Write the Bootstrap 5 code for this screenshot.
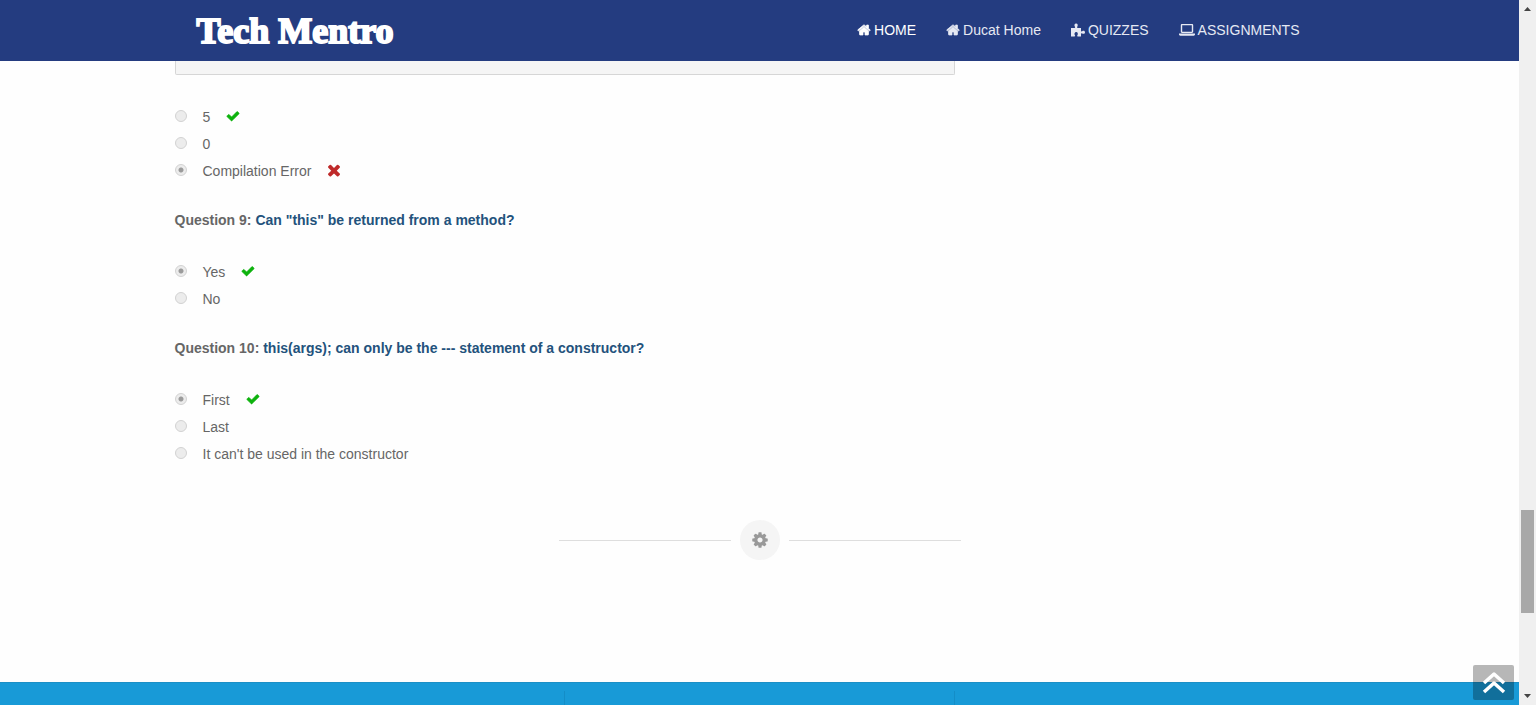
<!DOCTYPE html>
<html lang="en">
<head>
<meta charset="utf-8">
<meta name="viewport" content="width=device-width, initial-scale=1">
<title>Tech Mentro</title>
<link href="https://cdn.jsdelivr.net/npm/bootstrap@5.3.0/dist/css/bootstrap.min.css" rel="stylesheet">
<style>
body { font: 14px/20px "Liberation Sans", Arial, sans-serif; color: #666; background: #fefefe; }
.page-wrap { max-width: 1170px; }
.topbar { background: #243c80; height: 61px; }
.brand { font: bold 36px/40px "Liberation Serif", "Times New Roman", serif; color: #fff; -webkit-text-stroke: 2px #fff; margin-left: 22px; }
.brand:hover { color: #fff; }
.menu { gap: 30px; margin-right: 45px; padding-bottom: 2px; }
.menu .nav-link { color: #e6e9f3; gap: 3px; }
.menu .nav-link.active { color: #fff; }
.ico { width: 14px; height: 14px; fill: currentColor; flex: none; }
.ico-wide { width: 16px; }
.code-box { height: 14px; background: #f5f5f5; border: 1px solid #d6d6d6; border-top: 0; border-radius: 0 0 2px 2px; }
.first-answers { margin-top: 29px; }
.answer { height: 27px; line-height: 27px; gap: 16px; }
.answer input { appearance: none; width: 12px; height: 12px; margin: 0 0 3px; border: 1px solid #d2d2d2; border-radius: 50%; background: #ececec; opacity: 1; }
.answer input:checked { background: radial-gradient(circle, #9b9b9b 0 2px, #ececec 3px); }
.answer label { opacity: 1; }
.answer svg { margin-bottom: 3px; }
.right-mark { color: #0db20d; stroke: currentColor; stroke-width: 80; }
.wrong-mark { color: #bf2a2a; }
.question { font-size: 14px; line-height: 20px; font-weight: bold; margin: 25px 0 29px; }
.question span { color: #23527c; }
.divider { gap: 9px; margin-top: 52px; margin-bottom: 122px; }
.divider i { height: 1px; background: #dedede; width: 172px; }
.gear { width: 40px; height: 40px; background: #f5f5f5; color: #999; }
.gear svg { width: 18px; height: 18px; }
.foot { background: #189ad7; border-top: 1px solid #1b8fc6; }
.foot .page-wrap { padding-top: 8px; }
.foot-edge { border-right: 1px solid #148dc7; }
.to-top { right: 5px; bottom: 5px; width: 41px; height: 35px; background: rgba(0,0,0,.28); border-radius: 2px; }
.rail { width: 17px; background: #f0f0f0; }
.rail svg { width: 17px; height: 17px; fill: #444; }
.thumb { width: 13px; background: #a8a8a8; }
</style>
</head>
<body>
<svg class="d-none" aria-hidden="true">
  <symbol id="home" viewBox="0 0 1792 1792"><path stroke="currentColor" stroke-width="90" d="M1472 992v480q0 26-19 45t-45 19h-384v-384h-256v384h-384q-26 0-45-19t-19-45v-480q0-1 .5-3t.5-3l575-474 575 474q1 2 1 6zm223-69l-62 74q-8 9-21 11h-3q-13 0-21-7l-692-577-692 577q-12 8-24 7-13-2-21-11l-62-74q-8-10-7-23.5t11-21.5l719-599q32-26 76-26t76 26l244 204v-195q0-14 9-23t23-9h192q14 0 23 9t9 23v408l219 182q10 8 11 21.5t-7 23.5z"/></symbol>
  <symbol id="check" viewBox="0 0 1792 1792"><path d="M1671 566q0 40-28 68l-724 724-136 136q-28 28-68 28t-68-28l-136-136-362-362q-28-28-28-68t28-68l136-136q28-28 68-28t68 28l294 295 656-657q28-28 68-28t68 28l136 136q28 28 28 68z"/></symbol>
  <symbol id="cross" viewBox="200 200 1392 1392"><path d="M1490 1322q0 40-28 68l-136 136q-28 28-68 28t-68-28l-294-294-294 294q-28 28-68 28t-68-28l-136-136q-28-28-28-68t28-68l294-294-294-294q-28-28-28-68t28-68l136-136q28-28 68-28t68 28l294 294 294-294q28-28 68-28t68 28l136 136q28 28 28 68t-28 68l-294 294 294 294q28 28 28 68z"/></symbol>
  <symbol id="cog" viewBox="0 0 1792 1792"><path d="M1152 896q0-106-75-181t-181-75-181 75-75 181 75 181 181 75 181-75 75-181zm512-109v222q0 12-8 23t-20 13l-185 28q-19 54-39 91 35 50 107 138 10 12 10 25t-9 23q-27 37-99 108t-94 71q-12 0-26-9l-138-108q-44 23-91 38-16 136-29 186-7 28-36 28h-222q-14 0-24.5-8.500t-11.500-21.500l-28-184q-49-16-90-37l-141 107q-10 9-25 9-14 0-25-11-126-114-165-168-7-10-7-23 0-12 8-23 15-21 51-66.500t54-70.500q-27-50-41-99l-183-27q-13-2-21-12.500t-8-23.500v-222q0-12 8-23t19-13l186-28q14-46 39-92-40-57-107-138-10-12-10-24 0-10 9-23 26-36 98.500-107.500t94.500-71.500q13 0 26 10l138 107q44-23 91-38 16-136 29-186 7-28 36-28h222q14 0 24.500 8.500t11.500 21.500l28 184q49 16 90 37l142-107q9-9 24-9 13 0 25 10 129 119 165 170 7 8 7 22 0 12-8 23-15 21-51 66.500t-54 70.500q26 50 41 98l183 28q13 2 21 12.500t8 23.500z"/></symbol>
  <symbol id="puzzle" viewBox="0 0 14 14"><path d="M0 5h3.600c.7 0 .7-.6.3-1.200C2.900 2.200 3.600.6 5.100.6s2.200 1.600 1.200 3.200C5.900 4.400 6 5 6.700 5H10v2.700c0 .8.600.9 1.200.5 1.400-.9 2.800-.3 2.800 1.100s-1.400 2-2.800 1.200c-.6-.4-1.200-.3-1.200.5V13.500H6.800c-.8 0-.8-.6-.4-1.200.9-1.300.4-3.300-1.200-3.300s-2.200 2-1.300 3.300c.4.6.3 1.200-.5 1.200H0z"/></symbol>
  <symbol id="laptop" viewBox="0 0 16 14"><path fill-rule="evenodd" d="M3 1h10c.7 0 1.200.5 1.200 1.200v6.600c0 .7-.5 1.200-1.200 1.200H3c-.7 0-1.200-.5-1.200-1.200V2.200C1.800 1.500 2.300 1 3 1zm.2 1.300v6.400h9.600V2.300zM0 10.500h16v1c0 .6-.6 1.200-1.300 1.200H1.300c-.7 0-1.300-.6-1.300-1.200z"/></symbol>
</svg>
<div class="d-flex vh-100 overflow-hidden">
  <div class="d-flex flex-column flex-grow-1 position-relative overflow-hidden">
    <header class="topbar flex-shrink-0">
      <div class="page-wrap mx-auto h-100 d-flex align-items-center justify-content-between">
        <a class="brand text-decoration-none" href="#">Tech Mentro</a>
        <nav class="menu nav flex-nowrap">
          <a class="nav-link active p-0 d-flex align-items-center" href="#"><svg class="ico"><use href="#home"/></svg>HOME</a>
          <a class="nav-link p-0 d-flex align-items-center" href="#"><svg class="ico"><use href="#home"/></svg>Ducat Home</a>
          <a class="nav-link p-0 d-flex align-items-center" href="#"><svg class="ico"><use href="#puzzle"/></svg>QUIZZES</a>
          <a class="nav-link p-0 d-flex align-items-center" href="#"><svg class="ico ico-wide"><use href="#laptop"/></svg>ASSIGNMENTS</a>
        </nav>
      </div>
    </header>
    <main class="page-wrap w-100 mx-auto flex-shrink-0">
      <div class="row g-0"><div class="col-8"><div class="code-box"></div></div></div>
      <div class="first-answers">
        <div class="answer d-flex align-items-center"><input type="radio" name="q8" id="q8a" disabled><label for="q8a">5</label><svg class="ico right-mark"><use href="#check"/></svg></div>
        <div class="answer d-flex align-items-center"><input type="radio" name="q8" id="q8b" disabled><label for="q8b">0</label></div>
        <div class="answer d-flex align-items-center"><input type="radio" name="q8" id="q8c" checked disabled><label for="q8c">Compilation Error</label><svg class="ico wrong-mark"><use href="#cross"/></svg></div>
      </div>
      <h2 class="question">Question 9: <span>Can "this" be returned from a method?</span></h2>
      <div>
        <div class="answer d-flex align-items-center"><input type="radio" name="q9" id="q9a" checked disabled><label for="q9a">Yes</label><svg class="ico right-mark"><use href="#check"/></svg></div>
        <div class="answer d-flex align-items-center"><input type="radio" name="q9" id="q9b" disabled><label for="q9b">No</label></div>
      </div>
      <h2 class="question">Question 10: <span>this(args); can only be the --- statement of a constructor?</span></h2>
      <div>
        <div class="answer d-flex align-items-center"><input type="radio" name="q10" id="q10a" checked disabled><label for="q10a">First</label><svg class="ico right-mark"><use href="#check"/></svg></div>
        <div class="answer d-flex align-items-center"><input type="radio" name="q10" id="q10b" disabled><label for="q10b">Last</label></div>
        <div class="answer d-flex align-items-center"><input type="radio" name="q10" id="q10c" disabled><label for="q10c">It can't be used in the constructor</label></div>
      </div>
      <div class="divider d-flex align-items-center justify-content-center">
        <i></i><span class="gear rounded-circle d-flex align-items-center justify-content-center"><svg class="ico"><use href="#cog"/></svg></span><i></i>
      </div>
    </main>
    <footer class="foot flex-grow-1 d-flex">
      <div class="page-wrap w-100 mx-auto">
        <div class="row g-0 h-100"><div class="col-4 foot-edge"></div><div class="col-4 foot-edge"></div></div>
      </div>
    </footer>
    <button class="to-top btn border-0 p-0 position-absolute d-flex align-items-center justify-content-center" type="button" aria-label="Back to top">
      <svg width="26" height="26" viewBox="0 0 26 26" fill="none" stroke="#fff" stroke-width="3.500" stroke-linejoin="round"><path d="M3 13 13 4l10 9M3 22l10-9 10 9"/></svg>
    </button>
  </div>
  <div class="rail d-flex flex-column align-items-center flex-shrink-0">
    <svg viewBox="0 0 17 17"><path d="M5 11l3.500-4 3.500 4z"/></svg>
    <div class="d-flex flex-column flex-grow-1">
      <div style="flex: 493 0 0"></div><div class="thumb" style="flex: 103 0 0"></div><div style="flex: 75 0 0"></div>
    </div>
    <svg viewBox="0 0 17 17"><path d="M5 6h7l-3.500 4z"/></svg>
  </div>
</div>
<script src="https://cdn.jsdelivr.net/npm/bootstrap@5.3.0/dist/js/bootstrap.bundle.min.js"></script>
</body>
</html>
